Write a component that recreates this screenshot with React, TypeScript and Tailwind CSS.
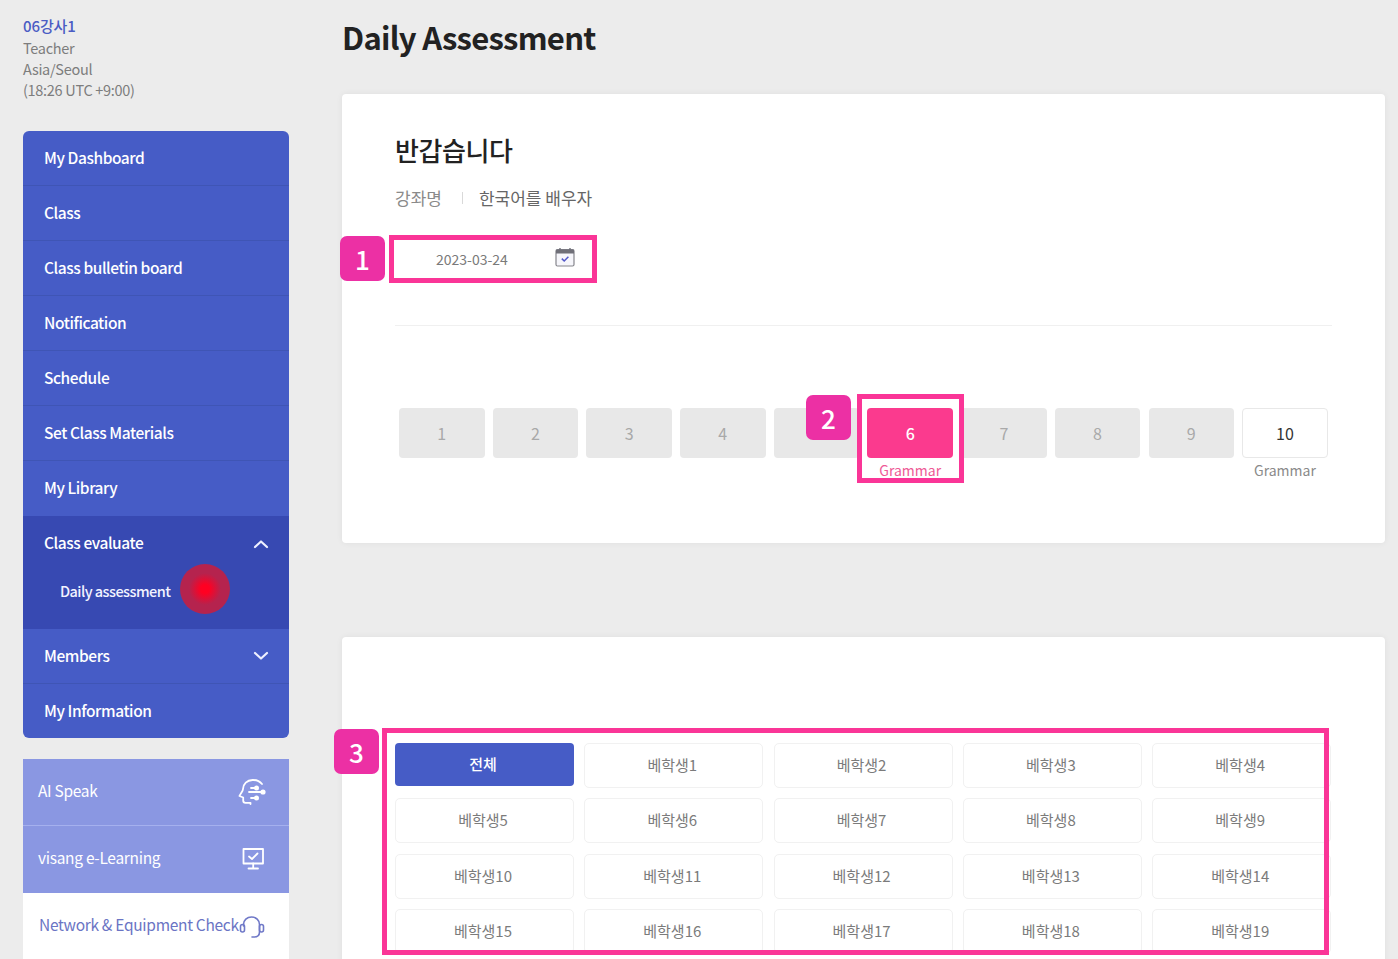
import React from "react";

const FONT = { fontFamily: '"Noto Sans CJK KR", "Noto Sans", sans-serif' };

function Chevron({ up }: { up?: boolean }) {
  return (
    <svg width="16" height="10" viewBox="0 0 16 10" fill="none" stroke="#eef0ff" strokeWidth="2.2" strokeLinecap="round" strokeLinejoin="round">
      <path d={up ? "M2 8 L8 2.5 L14 8" : "M2 2 L8 7.5 L14 2"} />
    </svg>
  );
}

function MenuRow({ label, last, right }: { label: string; last?: boolean; right?: React.ReactNode }) {
  return (
    <div className={`h-[55px] flex items-center justify-between pl-[21px] pr-[20px] text-[15.5px] font-medium text-white tracking-[-0.42px] ${last ? "" : "border-b border-[#3f55b5]"}`}>
      <span className="mb-[1px]">{label}</span>
      {right}
    </div>
  );
}

function HeadIcon() {
  return (
    <svg width="28" height="28" viewBox="0 0 28 28" fill="none" stroke="#fff" strokeWidth="1.8" strokeLinecap="round" strokeLinejoin="round">
      <path d="M24 6 C21.5 3 18 1.8 14.5 2 C9 2.2 5.2 6 5 11 C5 13 3 15 1.5 18 L5.2 19.5 V22.5 C5.2 24 6.2 24.8 7.5 24.8 H12.5 V26" />
      <path d="M13 10 H18.5" />
      <path d="M11 14 H25" />
      <path d="M13 20 H18.5" />
      <circle cx="18.5" cy="10" r="1.6" fill="#fff" />
      <circle cx="25" cy="14" r="1.7" fill="#fff" />
      <circle cx="18.5" cy="20" r="1.6" fill="#fff" />
    </svg>
  );
}

function MonitorIcon() {
  return (
    <svg width="24" height="24" viewBox="0 0 24 24" fill="none" stroke="#fff" strokeWidth="1.8" strokeLinecap="round" strokeLinejoin="round">
      <rect x="2.5" y="2" width="19.5" height="14.5" />
      <path d="M8 9.5 L11 12 L16.5 6.5" />
      <path d="M12.2 16.5 V21" />
      <path d="M7.5 21.5 H17" />
    </svg>
  );
}

function HeadsetIcon() {
  return (
    <svg width="26" height="26" viewBox="0 0 26 26" fill="none" stroke="#7079c8" strokeWidth="1.6" strokeLinecap="round" strokeLinejoin="round">
      <path d="M4.5 12 V10.5 C4.5 6.2 8 3 12.5 3 C17 3 20.5 6.2 20.5 10.5 V18 C20.5 21 18.5 23 15 23 H13" />
      <rect x="1.5" y="10.5" width="4" height="7.5" rx="2" />
      <rect x="20.5" y="10.5" width="4" height="7.5" rx="2" />
    </svg>
  );
}

function CalendarIcon() {
  return (
    <svg width="20" height="20" viewBox="0 0 20 20" fill="none">
      <rect x="1" y="2.5" width="18" height="16.5" rx="1.5" fill="#f6f6fb" stroke="#85858c" strokeWidth="1.2" />
      <path d="M1 3.5 a1 1 0 0 1 1-1 h16 a1 1 0 0 1 1 1 V6.5 H1 Z" fill="#6f6f78" />
      <path d="M5 1 V3 M15 1 V3" stroke="#6f6f78" strokeWidth="1.4" />
      <path d="M6.8 11.6 L9.2 14 L13.4 9.8" stroke="#5358c9" strokeWidth="1.5" fill="none" />
    </svg>
  );
}

function Badge({ n, className }: { n: number; className: string }) {
  return (
    <div className={`absolute z-20 w-[45px] h-[45px] rounded-[7px] bg-[#ec30a4] text-white text-[26px] font-medium flex items-center justify-center ${className}`}>
      {n}
    </div>
  );
}

const steps = [1, 2, 3, 4, 5, 6, 7, 8, 9, 10];
const students = ["베학생1", "베학생2", "베학생3", "베학생4", "베학생5", "베학생6", "베학생7", "베학생8", "베학생9", "베학생10", "베학생11", "베학생12", "베학생13", "베학생14", "베학생15", "베학생16", "베학생17", "베학생18", "베학생19"];

function Step({ n }: { n: number }) {
  const active = n === 6;
  const open = n === 10;
  const box = active
    ? "bg-[#fb3a8e] text-white font-medium"
    : open
    ? "bg-white border border-[#e8e8e8] text-[#333]"
    : "bg-[#e8e8e8] text-[#a9a9a9]";
  return (
    <div className={`w-[85.5px] shrink-0 flex flex-col items-center ${active ? "relative z-10" : ""}`}>
      {active && (
        <div className="absolute -z-10 left-[-10px] top-[-14px] w-[107px] h-[89px] border-[5px] border-[#fa3597] bg-white" />
      )}
      <div className={`w-full h-[50px] rounded-[4px] flex items-center justify-center text-[16px] ${box}`}>{n}</div>
      {(active || open) && (
        <div className={`mt-[2px] text-[14px] leading-[20px] ${active ? "text-[#ee5a96]" : "text-[#8a8a8a]"}`}>Grammar</div>
      )}
    </div>
  );
}

export default function App() {
  return (
    <div style={FONT} className="relative flex h-[959px] w-[1398px] overflow-hidden bg-[#ececec]">
      <aside className="ml-[23px] w-[266px] shrink-0 pt-[16px]">
        <div className="text-[14.5px] leading-[21px] text-[#7d7d7d] tracking-[-0.3px]">
          <div className="font-medium text-[15px] tracking-[-0.1px] text-[#4a5cc4] mt-[-1px] mb-[1px]">06강사1</div>
          <div>Teacher</div>
          <div>Asia/Seoul</div>
          <div>(18:26 UTC +9:00)</div>
        </div>
        <nav className="mt-[31px] rounded-[6px] overflow-hidden bg-[#465cc6]">
          <MenuRow label="My Dashboard" />
          <MenuRow label="Class" />
          <MenuRow label="Class bulletin board" />
          <MenuRow label="Notification" />
          <MenuRow label="Schedule" />
          <MenuRow label="Set Class Materials" />
          <MenuRow label="My Library" last />
          <div className="h-[113px] bg-[#3749b2]">
            <MenuRow label="Class evaluate" last right={<Chevron up />} />
            <div className="pl-[37px] mt-[-5px] text-[14.5px] font-medium text-[#f2f3ff] tracking-[-0.55px] leading-[50px]">Daily assessment</div>
          </div>
          <MenuRow label="Members" right={<Chevron />} />
          <div className="h-[54px] flex items-center pl-[21px] text-[15.5px] font-medium text-white tracking-[-0.42px]">My Information</div>
        </nav>
        <div className="mt-[21px]">
          <div className="h-[67px] bg-[#8a97e2] border-b border-[#a5b0ee] flex items-center justify-between pl-[15px] pr-[23px] text-[15.5px] text-white tracking-[-0.3px]">
            <span className="mb-[3px]">AI Speak</span>
            <HeadIcon />
          </div>
          <div className="h-[67px] bg-[#8a97e2] flex items-center justify-between pl-[15px] pr-[24px] text-[15.5px] text-white tracking-[-0.3px]">
            <span className="mb-[3px]">visang e-Learning</span>
            <span className="mb-[1px]"><MonitorIcon /></span>
          </div>
          <div className="h-[80px] bg-white pt-[19px] pl-[16px] flex items-start whitespace-nowrap text-[15.5px] text-[#6a74c4] tracking-[-0.3px]">
            <span className="leading-[24px] w-[200px] shrink-0">Network &amp; Equipment Check</span>
            <span className="mt-[2px]"><HeadsetIcon /></span>
          </div>
        </div>
      </aside>

      <main className="ml-[53px] w-[1043px] shrink-0">
        <h1 className="mt-[13px] h-[48px] text-[31px] leading-[48px] font-bold text-[#222] tracking-[-0.72px]">Daily Assessment</h1>

        <section className="mt-[33px] h-[449px] rounded-[4px] bg-white pt-[36px] px-[53px] shadow-[0_0_6px_rgba(0,0,0,0.06)]">
          <div className="text-[26px] leading-[40px] font-medium text-[#222] tracking-[-0.4px]">반갑습니다</div>
          <div className="mt-[16px] flex items-center text-[17px] leading-[24px]">
            <span className="text-[#8a8a8a]">강좌명</span>
            <span className="ml-[20px] mr-[16px] h-[12px] w-px bg-[#d9d9d9]" />
            <span className="text-[#666]">한국어를 배우자</span>
          </div>
          <div className="mt-[24px] h-[48px] flex items-center">
            <span className="ml-[41px] mt-[2px] text-[14px] text-[#7a7a7a]">2023-03-24</span>
            <span className="ml-[47px] mb-[2px]"><CalendarIcon /></span>
          </div>
          <div className="mt-[43px] h-px bg-[#f0f0f0]" />
          <div className="mt-[82px] ml-[4px] flex gap-[8.2px]">
            {steps.map((n) => (
              <Step key={n} n={n} />
            ))}
          </div>
        </section>

        <section className="mt-[94px] h-[400px] rounded-t-[4px] bg-white pt-[105.6px] pl-[53px] shadow-[0_0_6px_rgba(0,0,0,0.06)]">
          <div className="grid grid-cols-[repeat(5,179px)] gap-x-[10.3px] gap-y-[10.5px]">
            <div className="h-[43px] rounded-[4px] bg-[#465cc6] text-white text-[15px] font-medium flex items-center justify-center pr-[3px]">전체</div>
            {students.map((s) => (
              <div key={s} className="h-[45px] rounded-[5px] border border-[#f1f1f1] bg-white text-[#7b7b7b] text-[15px] flex items-center justify-center pr-[3px]">
                {s}
              </div>
            ))}
          </div>
        </section>
      </main>

      {/* annotations over the page */}
      <div className="absolute left-[180px] top-[564px] w-[50px] h-[50px] rounded-full bg-[radial-gradient(circle,#ff0022_0%,#ff0022_12%,#b5234e_45%,#b5234e_82%,rgba(181,35,78,0)_100%)]" />

      <div className="absolute left-[389px] top-[235px] w-[208px] h-[48px] border-[5px] border-[#fa3597]" />
      <Badge n={1} className="left-[340px] top-[236px]" />
      <Badge n={2} className="left-[806px] top-[395px]" />

      <div className="absolute left-[382px] top-[728px] w-[947px] h-[227px] border-[5px] border-[#fa3597]" />
      <Badge n={3} className="left-[334px] top-[729px]" />
    </div>
  );
}
